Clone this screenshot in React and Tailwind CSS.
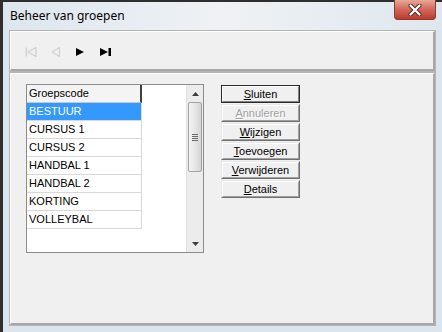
import React from "react";

const groups = ["BESTUUR", "CURSUS 1", "CURSUS 2", "HANDBAL 1", "HANDBAL 2", "KORTING", "VOLLEYBAL"];

const buttons = [
  { key: "S", rest: "luiten", isDefault: true },
  { key: "A", rest: "nnuleren", disabled: true },
  { key: "W", rest: "ijzigen" },
  { key: "T", rest: "oevoegen" },
  { key: "V", rest: "erwijderen" },
  { key: "D", rest: "etails" },
];

// toolbar navigation arrows
const FirstIcon = () => (
  <svg width="12" height="10" viewBox="0 0 12 10">
    <rect x="0.5" y="0.5" width="1.5" height="9" fill="#d4d4d4" />
    <path d="M11 0.5 L3 5 L11 9.5 Z" fill="none" stroke="#d0d0d0" strokeWidth="1.2" />
  </svg>
);
const PrevIcon = () => (
  <svg width="9" height="10" viewBox="0 0 9 10">
    <path d="M8.5 0.5 L1 5 L8.5 9.5 Z" fill="none" stroke="#d0d0d0" strokeWidth="1.2" />
  </svg>
);
const NextIcon = () => (
  <svg width="8" height="8" viewBox="0 0 8 8">
    <path d="M0 0 L8 4 L0 8 Z" fill="#000" />
  </svg>
);
const LastIcon = () => (
  <svg width="11" height="8" viewBox="0 0 11 8">
    <path d="M0 0 L8 4 L0 8 Z" fill="#000" />
    <rect x="8.5" y="0" width="2.5" height="8" fill="#000" />
  </svg>
);

const ClassicButton = ({ label }) => {
  const base = "h-[18px] w-[79px] flex items-center justify-center text-[11px] leading-none bg-[#f0f0f0]";
  if (label.isDefault) {
    return (
      <div className={`${base} border border-[#2a2a2a]`}>
        <div className="w-full h-full flex items-center justify-center border-t border-l border-t-white border-l-white border-b border-r border-b-[#808080] border-r-[#808080]">
          <span className="underline decoration-1 underline-offset-1">{label.key}</span>
          <span>{label.rest}</span>
        </div>
      </div>
    );
  }
  return (
    <div className={`${base} border-t border-l border-t-[#e8e8e8] border-l-[#e8e8e8] border-b border-r border-b-[#6f6f6f] border-r-[#6f6f6f]`}>
      <div className="w-full h-full flex items-center justify-center border-t border-l border-t-white border-l-white border-b border-r border-b-[#a0a0a0] border-r-[#a0a0a0]">
        {label.disabled ? (
          <span className="text-[#a0a0a0] [text-shadow:1px_1px_0_#ffffff]">
            <span className="underline decoration-1 underline-offset-1">{label.key}</span>
            {label.rest}
          </span>
        ) : (
          <span>
            <span className="underline decoration-1 underline-offset-1">{label.key}</span>
            {label.rest}
          </span>
        )}
      </div>
    </div>
  );
};

const ScrollBar = () => (
  <div className="w-[17px] h-full flex flex-col bg-[#ececec] border-l border-[#e2e2e2]">
    <div className="h-[17px] flex items-center justify-center">
      <svg width="7" height="4" viewBox="0 0 7 4">
        <path d="M0 4 L3.5 0 L7 4 Z" fill="#3c3c3c" />
      </svg>
    </div>
    <div className="h-[70px] mx-[1px] rounded-[2px] border border-[#a3a3a3] bg-gradient-to-r from-[#f4f4f4] via-[#e6e6e6] to-[#d4d4d4] flex items-center justify-center">
      <div className="flex flex-col gap-[1px]">
        <div className="w-[6px] h-[1px] bg-[#6a6a6a]" />
        <div className="w-[6px] h-[1px] bg-[#6a6a6a]" />
        <div className="w-[6px] h-[1px] bg-[#6a6a6a]" />
        <div className="w-[6px] h-[1px] bg-[#6a6a6a]" />
      </div>
    </div>
    <div className="flex-1" />
    <div className="h-[17px] flex items-center justify-center">
      <svg width="7" height="4" viewBox="0 0 7 4">
        <path d="M0 0 L7 0 L3.5 4 Z" fill="#3c3c3c" />
      </svg>
    </div>
  </div>
);

export default function App() {
  return (
    <div
      className="w-[442px] h-[332px] overflow-hidden bg-[#dbe5ed] border-l-[3px] border-[#2e2e2e] flex flex-col"
      style={{ fontFamily: '"Liberation Sans", Arial, sans-serif' }}
    >
      {/* title bar */}
      <div className="h-[30px] shrink-0 border-t-2 border-[#2e2e2e] bg-gradient-to-r from-[#dde6ee] via-[#eef2f5] to-[#dfe7ee] flex items-center justify-between">
        <span className="pl-[7px] pb-[1px] text-[12px] text-black" style={{ fontFamily: '"Noto Sans", sans-serif' }}>
          Beheer van groepen
        </span>
        <div className="self-start -mt-[2px] mr-[6px] w-[42px] h-[20px] rounded-b-[4px] border border-t-0 border-[#8a3a30] bg-gradient-to-b from-[#e6a898] via-[#d0675a] to-[#c0392c] flex items-center justify-center">
          <svg width="14" height="12" viewBox="0 0 14 12">
            <path d="M2.5 1.5 L11.5 10.5 M11.5 1.5 L2.5 10.5" stroke="#4a2a28" strokeWidth="4" strokeLinecap="round" />
            <path d="M2.5 1.5 L11.5 10.5 M11.5 1.5 L2.5 10.5" stroke="#ffffff" strokeWidth="2.2" strokeLinecap="round" />
          </svg>
        </div>
      </div>

      {/* client area */}
      <div className="ml-[6px] mr-[6px] w-[427px] h-[296px] flex flex-col bg-[#f0f0f0]">
        {/* toolbar */}
        <div className="h-[42px] shrink-0 border border-[#b4b4b4]">
          <div className="h-full border-t border-l border-t-white border-l-white border-b-2 border-r-2 border-b-[#a8a8a8] border-r-[#a8a8a8] flex items-center pl-[14px] pt-[2px] gap-0">
            <div className="w-[26px] flex items-center"><FirstIcon /></div>
            <div className="w-[25px] flex items-center"><PrevIcon /></div>
            <div className="w-[24px] flex items-center"><NextIcon /></div>
            <div className="w-[20px] flex items-center"><LastIcon /></div>
          </div>
        </div>

        {/* main panel */}
        <div className="flex-1 border border-[#b4b4b4]">
          <div className="h-full border-t border-l border-t-white border-l-white border-b-2 border-r-2 border-b-[#a8a8a8] border-r-[#a8a8a8] flex items-start pl-[15px] pt-[10px]">
            {/* list */}
            <div className="w-[178px] h-[169px] border border-[#8c8c8c] bg-white flex">
              <div className="flex-1 flex flex-col">
                <div className="w-[115px] h-[18px] bg-[#f4f4f4] border-b border-[#c8c8c8] border-r-2 border-r-[#404040] flex items-center pl-[2px] text-[11px] text-black">
                  Groepscode
                </div>
                {groups.map((g, i) => (
                  <div
                    key={g}
                    className={`w-[115px] h-[18px] border-b border-r border-[#d8d8d8] flex items-center pl-[2px] text-[11px] ${
                      i === 0 ? "bg-[#3399ff] text-white" : "bg-white text-black"
                    }`}
                  >
                    {g}
                  </div>
                ))}
              </div>
              <ScrollBar />
            </div>

            {/* buttons */}
            <div className="ml-[17px] mt-[1px] flex flex-col gap-[1px]">
              {buttons.map((b) => (
                <ClassicButton key={b.key} label={b} />
              ))}
            </div>
          </div>
        </div>
      </div>
    </div>
  );
}
